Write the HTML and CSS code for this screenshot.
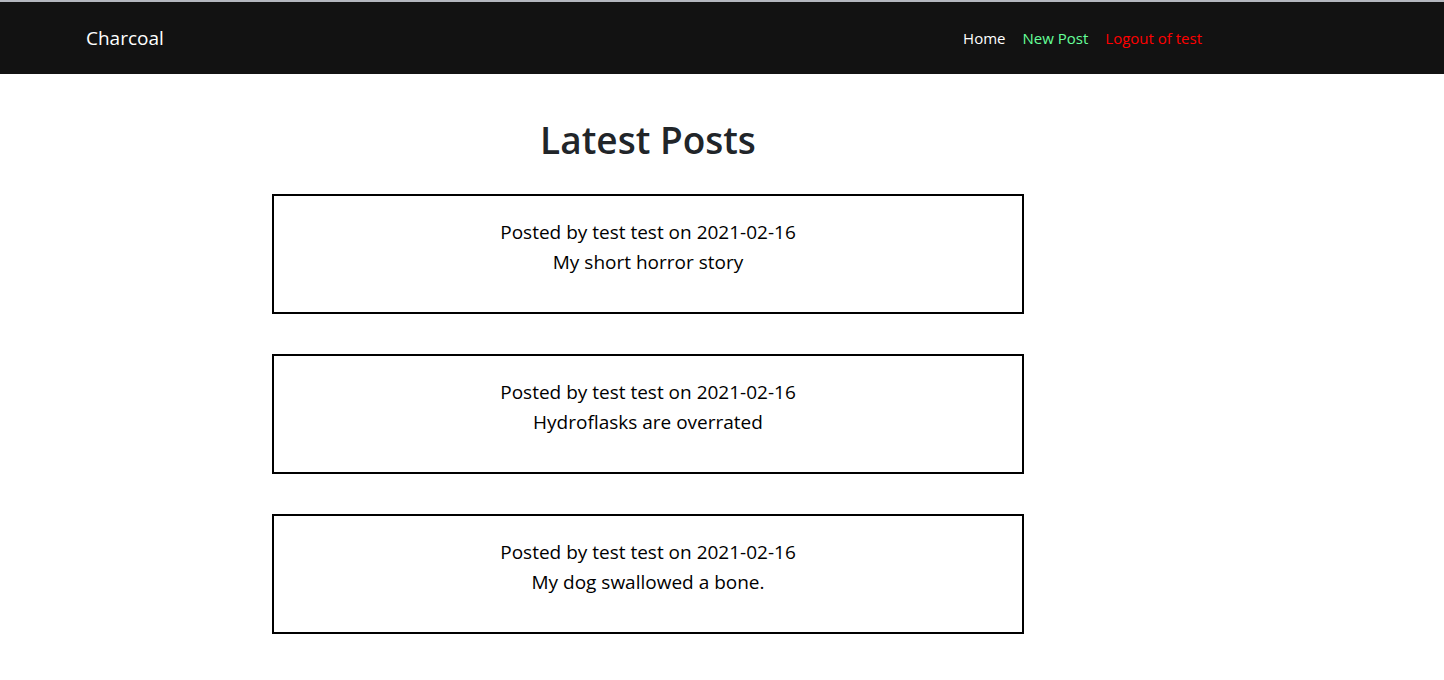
FILE: index.html
```html
<!DOCTYPE html>
<html lang="en">
<head>
<meta charset="utf-8">
<title>Charcoal</title>
<link rel="stylesheet" href="styles.css">
</head>
<body>
<header class="navbar">
  <a class="brand" href="#">Charcoal</a>
  <nav class="nav-links">
    <a class="nav-link" href="#">Home</a>
    <a class="nav-link nav-link-new" href="#">New Post</a>
    <a class="nav-link nav-link-logout" href="#">Logout of test</a>
  </nav>
</header>
<main class="posts">
  <h1 class="title">Latest Posts</h1>
  <a class="post" href="#"><span>Posted by test test on 2021-02-16</span><span>My short horror story</span></a>
  <a class="post" href="#"><span>Posted by test test on 2021-02-16</span><span>Hydroflasks are overrated</span></a>
  <a class="post" href="#"><span>Posted by test test on 2021-02-16</span><span>My dog swallowed a bone.</span></a>
</main>
</body>
</html>
```
FILE: styles.css
```css
* { box-sizing: border-box; }
body {
  margin: 0;
  background: #fff;
  color: #212529;
  font-family: "Segoe UI", "Open Sans", "Noto Sans", sans-serif;
  font-size: 16px;
  line-height: 24px;
}
a { text-decoration: none; }
.navbar {
  display: flex;
  align-items: center;
  justify-content: space-between;
  min-height: 74px;
  padding: 0 242px 0 86px;
  border-top: 2px solid #b4b7be;
  background: #121212;
}
.brand { color: #fff; font-size: 19px; line-height: 30px; }
.nav-links { display: flex; gap: 17px; }
.nav-link { color: #fff; font-size: 15px; }
.nav-link-new { color: #66ff99; }
.nav-link-logout { color: #f00; }
.posts {
  display: flex;
  flex-direction: column;
  gap: 40px;
  max-width: 752px;
  margin: 42px 420px 40px auto;
  text-align: center;
}
.title {
  margin: 0 0 -10px;
  font-size: 37px;
  font-weight: 600;
  line-height: 48px;
}
.post {
  display: flex;
  flex-direction: column;
  padding: 21px 20px 35px;
  border: 2px solid #000;
  color: #000;
  font-size: 19px;
  line-height: 30px;
}
```
